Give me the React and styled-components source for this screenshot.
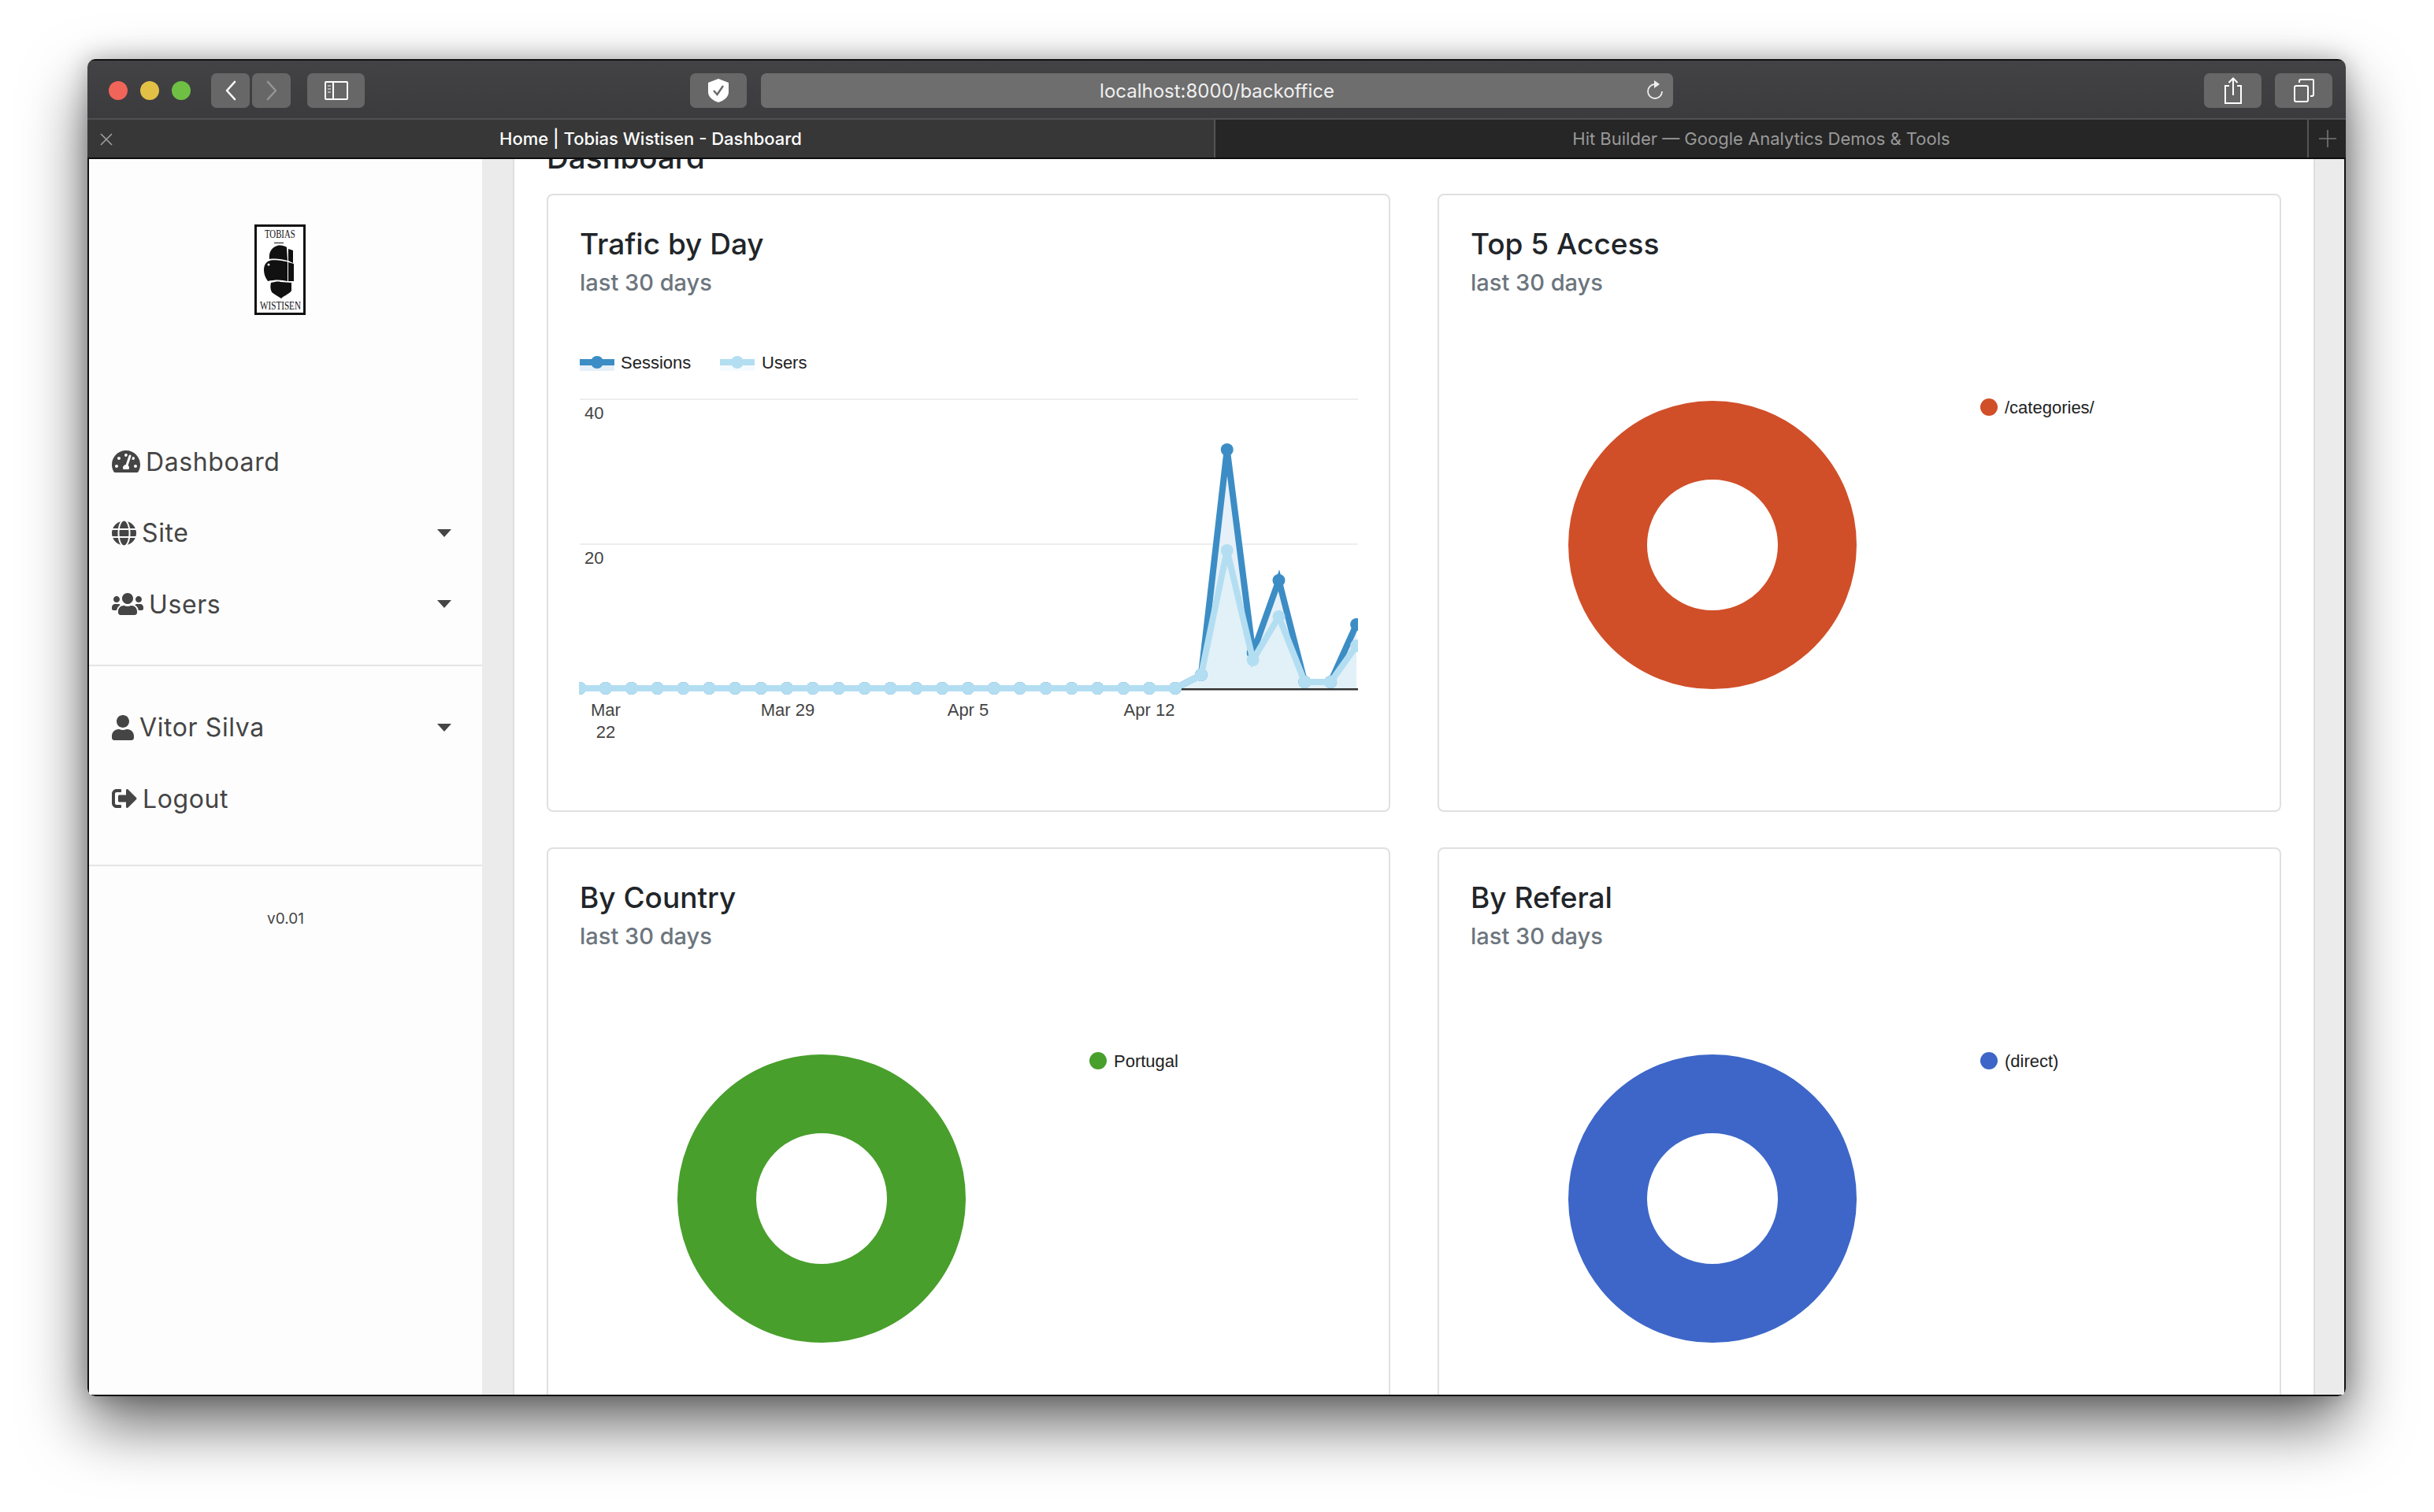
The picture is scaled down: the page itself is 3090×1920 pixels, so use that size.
import styled, { createGlobalStyle } from "styled-components";
import { FaTachometerAlt, FaGlobe, FaUsers, FaUser, FaSignOutAlt } from "react-icons/fa";

const GlobalStyle = createGlobalStyle`
    html, body {
        margin: 0;
        padding: 0;
        height: 100%;
        background: #ffffff;
    }
    html {
        overflow: hidden;
    }
    * {
        box-sizing: border-box;
    }
`;

const UI_FONT = `Inter, "Liberation Sans", sans-serif`;
const CHART_FONT = `"Liberation Sans", Arial, sans-serif`;

// chart points: x from index, y in px inside the svg
const STEP = 32.87;
const ZERO = 454;
const sessionTail = { 24: 437, 25: 151, 26: 409, 27: 317, 28: 446, 29: 446, 30: 373 };
const userTail = { 24: 437, 25: 279, 26: 418, 27: 363, 28: 446, 29: 446, 30: 400 };

function buildSeries(tail) {
    const points = [];
    for (let i = 0; i <= 30; i++) {
        points.push({ x: i * STEP, y: tail[i] !== undefined ? tail[i] : ZERO });
    }
    return points;
}

const sessions = buildSeries(sessionTail);
const users = buildSeries(userTail);

const toLine = (points) => points.map((p) => `${p.x},${p.y}`).join(" ");
const toArea = (points) => `0,${ZERO + 1} ${toLine(points)} ${points[30].x},${ZERO + 1}`;

function LineChart() {
    return (
        <ChartSvg viewBox="0 0 988 600" height="600">
            <defs>
                <clipPath id="plot">
                    <rect x="-1" y="60" width="989" height="410" />
                </clipPath>
            </defs>

            <rect x="0" y="36" width="44" height="8" fill="#3c8dc5" />
            <rect x="0" y="44" width="44" height="7" fill="#e6f0f8" />
            <circle cx="22" cy="40" r="8" fill="#3c8dc5" />
            <ChartLabel x="52" y="48" fill="#222222">Sessions</ChartLabel>
            <rect x="178" y="36" width="44" height="8" fill="#b3def2" />
            <rect x="178" y="44" width="44" height="7" fill="#f5fbfe" />
            <circle cx="200" cy="40" r="8" fill="#b3def2" />
            <ChartLabel x="231" y="48" fill="#222222">Users</ChartLabel>

            <rect x="0" y="86" width="988" height="2" fill="#eeeeee" />
            <rect x="0" y="270" width="988" height="2" fill="#eeeeee" />
            <ChartLabel x="6" y="112" fill="#444444">40</ChartLabel>
            <ChartLabel x="6" y="296" fill="#444444">20</ChartLabel>

            <g clipPath="url(#plot)">
                <polygon points={toArea(sessions)} fill="#e6f0f8" />
                <polygon points={toArea(users)} fill="#e2f0f8" />
                <rect x="0" y="454" width="988" height="2.5" fill="#333333" />
                <polyline points={toLine(sessions)} fill="none" stroke="#3c8dc5" strokeWidth="8" />
                {sessions.map((p, i) => (
                    <circle key={i} cx={p.x} cy={p.y} r="8" fill="#3c8dc5" />
                ))}
                <polyline points={toLine(users)} fill="none" stroke="#b3def2" strokeWidth="8" />
                {users.map((p, i) => (
                    <circle key={i} cx={p.x} cy={p.y} r="8" fill="#b3def2" />
                ))}
            </g>

            <ChartLabel x="33" y="489" fill="#444444" textAnchor="middle">Mar</ChartLabel>
            <ChartLabel x="33" y="517" fill="#444444" textAnchor="middle">22</ChartLabel>
            <ChartLabel x="264" y="489" fill="#444444" textAnchor="middle">Mar 29</ChartLabel>
            <ChartLabel x="493" y="489" fill="#444444" textAnchor="middle">Apr 5</ChartLabel>
            <ChartLabel x="723" y="489" fill="#444444" textAnchor="middle">Apr 12</ChartLabel>
        </ChartSvg>
    );
}

function DonutChart({ color, label }) {
    return (
        <ChartSvg viewBox="0 0 988 600" height="600">
            <circle cx="307" cy="272" r="133" fill="none" stroke={color} strokeWidth="100" />
            <circle cx="658" cy="97" r="11" fill={color} />
            <ChartLabel x="678" y="105" fill="#222222">{label}</ChartLabel>
        </ChartSvg>
    );
}

function Logo() {
    return (
        <LogoSvg viewBox="0 0 65 115" width="65" height="115">
            <rect x="1.5" y="1.5" width="62" height="112" fill="#ffffff" stroke="#111111" strokeWidth="3" />
            <LogoText x="18" y="17.5" transform="scale(0.72 1)">TOBIAS</LogoText>
            <path d="M25 23 L37 23 L37 24 L25 24 Z" fill="#111111" />
            <path d="M19 44 C18 35 22 29 29 27 C33 26 38 27 41 29 L42 46 C35 44 27 43 19 44 Z" fill="#111111" />
            <path d="M43 31 L49 33 L49 49 L43 46 Z" fill="#111111" />
            <path d="M12 58 C12 51 15 47 21 45.5 C28 44.5 36 46 42 47.5 L42 72 C34 70 26 70 17 72 C14 68 12 63 12 58 Z" fill="#111111" />
            <path d="M43 48 L50 50 L50 72 L43 72 Z" fill="#111111" />
            <path d="M21 74 C26 73 30 72 33 73 L47 74 L47 84 C45 88 38 90 34 94 C30 91 25 89 22 86 C20 82 20 78 21 74 Z" fill="#111111" />
            <circle cx="18" cy="51" r="1.5" fill="#ffffff" />
            <LogoText x="9.4" y="108.5" transform="scale(0.743 1)">WISTISEN</LogoText>
        </LogoSvg>
    );
}

function App() {
    return (
        <Desktop>
            <GlobalStyle />
            <Window>
                <TitleBar>
                    <Lights>
                        <Light $color="#f1645a" />
                        <Light $color="#e2c046" />
                        <Light $color="#6fbf45" />
                    </Lights>
                    <NavButtons>
                        <ChromeButton $width={49}>
                            <svg width="20" height="26" viewBox="0 0 20 26" fill="none" stroke="#ffffff" strokeWidth="2.6" strokeLinecap="round" strokeLinejoin="round">
                                <path d="M15 2 L5 13 L15 24" />
                            </svg>
                        </ChromeButton>
                        <ChromeButton $width={49}>
                            <svg width="20" height="26" viewBox="0 0 20 26" fill="none" stroke="#959595" strokeWidth="2.6" strokeLinecap="round" strokeLinejoin="round">
                                <path d="M5 2 L15 13 L5 24" />
                            </svg>
                        </ChromeButton>
                    </NavButtons>
                    <SidebarToggle $width={73}>
                        <svg width="30" height="24" viewBox="0 0 30 24" fill="none" stroke="#ffffff" strokeWidth="2">
                            <rect x="1" y="1" width="28" height="22" rx="1" />
                            <path d="M11 1 V23" />
                            <path d="M4 6 H8 M4 10 H8 M4 14 H8" strokeWidth="1.6" stroke="#c8c8c8" />
                        </svg>
                    </SidebarToggle>
                    <ShieldButton $width={72}>
                        <svg width="28" height="32" viewBox="0 0 28 32">
                            <path d="M14 1 L27 6 V18 C27 24 21 29 14 31 C7 29 1 24 1 18 V6 Z" fill="#ffffff" />
                            <path d="M8 16 L12.5 21 L20 10" fill="none" stroke="#6a6a6a" strokeWidth="2.4" />
                        </svg>
                    </ShieldButton>
                    <UrlBar>
                        localhost:8000/backoffice
                        <ReloadIcon width="22" height="28" viewBox="0 0 22 28" fill="none" stroke="#eeeeee" strokeWidth="1.8">
                            <path d="M11 6 A9 9 0 1 0 20 15" />
                            <path d="M10 1 L17 6 L10 11 Z" fill="#eeeeee" stroke="none" />
                        </ReloadIcon>
                    </UrlBar>
                    <RightButtons>
                        <ChromeButton $width={73}>
                            <svg width="24" height="34" viewBox="0 0 24 34" fill="none" stroke="#ffffff" strokeWidth="2">
                                <path d="M7 11 H2 V33 H22 V11 H17" />
                                <path d="M12 23 V2 M6.5 7 L12 1.5 L17.5 7" />
                            </svg>
                        </ChromeButton>
                        <ChromeButton $width={73}>
                            <svg width="26" height="30" viewBox="0 0 26 30" fill="none" stroke="#ffffff" strokeWidth="2">
                                <rect x="1" y="9" width="17" height="20" rx="2" />
                                <path d="M7 5 V3 C7 2 8 1 9 1 H24 C24.5 1 25 1.5 25 2 V20 C25 21 24 22 23 22 H21" />
                            </svg>
                        </ChromeButton>
                    </RightButtons>
                </TitleBar>

                <TabBar>
                    <ActiveTab>
                        <CloseMark width="16" height="16" viewBox="0 0 16 16" stroke="#a0a0a0" strokeWidth="1.6">
                            <path d="M1 1 L15 15 M15 1 L1 15" />
                        </CloseMark>
                        Home | Tobias Wistisen - Dashboard
                    </ActiveTab>
                    <InactiveTab>Hit Builder — Google Analytics Demos &amp; Tools</InactiveTab>
                    <NewTab>
                        <svg width="22" height="22" viewBox="0 0 22 22" stroke="#777777" strokeWidth="1.6">
                            <path d="M11 0 V22 M0 11 H22" />
                        </svg>
                    </NewTab>
                </TabBar>

                <Page>
                    <Sidebar>
                        <LogoWrap>
                            <Logo />
                        </LogoWrap>
                        <NavList>
                            <NavItem>
                                <NavLabel $iconWidth={36}><FaTachometerAlt />Dashboard</NavLabel>
                            </NavItem>
                            <NavItem>
                                <NavLabel $iconWidth={31}><FaGlobe />Site</NavLabel>
                                <Caret />
                            </NavItem>
                            <NavItem>
                                <NavLabel $iconWidth={40}><FaUsers />Users</NavLabel>
                                <Caret />
                            </NavItem>
                        </NavList>
                        <Divider />
                        <UserList>
                            <NavItem>
                                <NavLabel $iconWidth={28}><FaUser />Vitor Silva</NavLabel>
                                <Caret />
                            </NavItem>
                            <NavItem>
                                <NavLabel $iconWidth={32}><FaSignOutAlt />Logout</NavLabel>
                            </NavItem>
                        </UserList>
                        <Divider />
                        <Version>v0.01</Version>
                    </Sidebar>
                    <Gutter $side="right" />
                    <Main>
                        <Heading>Dashboard</Heading>
                        <CardGrid>
                            <Card>
                                <CardTitle>Trafic by Day</CardTitle>
                                <CardSubtitle>last 30 days</CardSubtitle>
                                <LineChart />
                            </Card>
                            <Card>
                                <CardTitle>Top 5 Access</CardTitle>
                                <CardSubtitle>last 30 days</CardSubtitle>
                                <DonutChart color="#d04f29" label="/categories/" />
                            </Card>
                            <Card>
                                <CardTitle>By Country</CardTitle>
                                <CardSubtitle>last 30 days</CardSubtitle>
                                <DonutChart color="#489f2c" label="Portugal" />
                            </Card>
                            <Card>
                                <CardTitle>By Referal</CardTitle>
                                <CardSubtitle>last 30 days</CardSubtitle>
                                <DonutChart color="#3d66c8" label="(direct)" />
                            </Card>
                        </CardGrid>
                    </Main>
                    <Gutter $side="left" />
                </Page>
            </Window>
        </Desktop>
    );
}

const Desktop = styled.div`
    height: 1920px;
    padding: 75px 0 0 111px;
`;

const Window = styled.div`
    width: 2867px;
    height: 1698px;
    border-radius: 10px;
    overflow: hidden;
    display: flex;
    flex-direction: column;
    font-family: ${UI_FONT};
    box-shadow: 0 36px 80px rgba(0, 0, 0, 0.6), 0 0 30px rgba(0, 0, 0, 0.25);
`;

const TitleBar = styled.div`
    height: 77px;
    flex: none;
    display: flex;
    align-items: center;
    padding: 3px 17px 0 27px;
    background: linear-gradient(#434345, #3b3b3d);
    border-top: 2px solid #111111;
    border-bottom: 2px solid #505050;
`;

const Lights = styled.div`
    display: flex;
    gap: 16px;
    margin-right: 26px;
`;

const Light = styled.div`
    width: 24px;
    height: 24px;
    border-radius: 50%;
    background: ${(props) => props.$color};
`;

const NavButtons = styled.div`
    display: flex;
    gap: 3px;
`;

const ChromeButton = styled.div`
    width: ${(props) => props.$width}px;
    height: 44px;
    flex: none;
    display: flex;
    align-items: center;
    justify-content: center;
    border-radius: 7px;
    background: #676768;
`;

const SidebarToggle = styled(ChromeButton)`
    margin-left: 21px;
`;

const ShieldButton = styled(ChromeButton)`
    margin-left: 413px;
`;

const UrlBar = styled.div`
    position: relative;
    width: 1158px;
    height: 44px;
    margin-left: 18px;
    display: flex;
    align-items: center;
    justify-content: center;
    border-radius: 7px;
    background: #6e6e6e;
    color: #f0f0f0;
    font-size: 24px;
`;

const ReloadIcon = styled.svg`
    position: absolute;
    right: 12px;
    top: 8px;
`;

const RightButtons = styled.div`
    display: flex;
    gap: 17px;
    margin-left: auto;
`;

const TabBar = styled.div`
    height: 50px;
    flex: none;
    display: flex;
    background: #262626;
    border-bottom: 2px solid #0c0c0c;
    font-size: 22px;
`;

const ActiveTab = styled.div`
    position: relative;
    width: 1432px;
    display: flex;
    align-items: center;
    justify-content: center;
    background: #373737;
    color: #ffffff;
    font-weight: 500;
    border-right: 2px solid #555555;
`;

const CloseMark = styled.svg`
    position: absolute;
    left: 16px;
    top: 17px;
`;

const InactiveTab = styled.div`
    flex: 1;
    display: flex;
    align-items: center;
    justify-content: center;
    color: #999999;
`;

const NewTab = styled.div`
    width: 49px;
    display: flex;
    align-items: center;
    justify-content: center;
    border-left: 2px solid #555555;
`;

const Page = styled.div`
    flex: 1;
    min-height: 0;
    display: grid;
    grid-template-columns: 499px 41px 1fr 39px;
    background: #ffffff;
    border-bottom: 2px solid #111111;
    border-left: 2px solid #111111;
    border-right: 2px solid #111111;
`;

const Sidebar = styled.div`
    background: #fdfdfd;
    color: #454545;
`;

const LogoWrap = styled.div`
    padding: 83px 0 0 210px;
`;

const LogoSvg = styled.svg`
    display: block;
`;

const LogoText = styled.text`
    font-family: "Liberation Serif", serif;
    font-size: 15px;
    fill: #111111;
`;

const NavList = styled.div`
    margin-top: 141px;
    margin-bottom: 31px;
`;

const UserList = styled.div`
    margin-top: 33px;
    margin-bottom: 38px;
`;

const NavItem = styled.div`
    height: 90.5px;
    display: flex;
    align-items: center;
    justify-content: space-between;
    padding: 0 39px 0 29px;
`;

const NavLabel = styled.div`
    display: flex;
    align-items: center;
    gap: 7px;
    font-size: 32px;
    letter-spacing: 0.6px;

    svg {
        width: ${(props) => props.$iconWidth}px;
        height: 32px;
        flex: none;
    }
`;

const Caret = styled.div`
    width: 0;
    height: 0;
    border-left: 9px solid transparent;
    border-right: 9px solid transparent;
    border-top: 10px solid #454545;
`;

const Divider = styled.div`
    height: 2px;
    background: #e4e4e4;
`;

const Version = styled.div`
    margin-top: 53px;
    text-align: center;
    font-size: 19px;
    line-height: 28px;
`;

const Gutter = styled.div`
    background: #ebebeb;
    border-${(props) => props.$side}: 2px solid #dedede;
`;

const Main = styled.div`
    min-width: 0;
    overflow: hidden;
    padding: 0 41px;
`;

const Heading = styled.h1`
    margin: -26px 0 22px;
    font-size: 38.5px;
    line-height: 48px;
    font-weight: 500;
    color: #212529;
`;

const CardGrid = styled.div`
    display: grid;
    grid-template-columns: 1071px 1071px;
    column-gap: 60px;
    row-gap: 45px;
`;

const Card = styled.div`
    height: 785px;
    padding: 34px 40px 0;
    background: #ffffff;
    border: 2px solid #e0e0e0;
    border-radius: 8px;
`;

const CardTitle = styled.div`
    font-size: 37px;
    line-height: 56px;
    font-weight: 500;
    color: #212529;
`;

const CardSubtitle = styled.div`
    font-size: 29px;
    line-height: 42px;
    font-weight: 500;
    color: #6c757d;
`;

const ChartSvg = styled.svg`
    display: block;
    width: 988px;
    margin-top: 40px;
    overflow: visible;
`;

const ChartLabel = styled.text`
    font-family: ${CHART_FONT};
    font-size: 22px;
`;

export default App;
